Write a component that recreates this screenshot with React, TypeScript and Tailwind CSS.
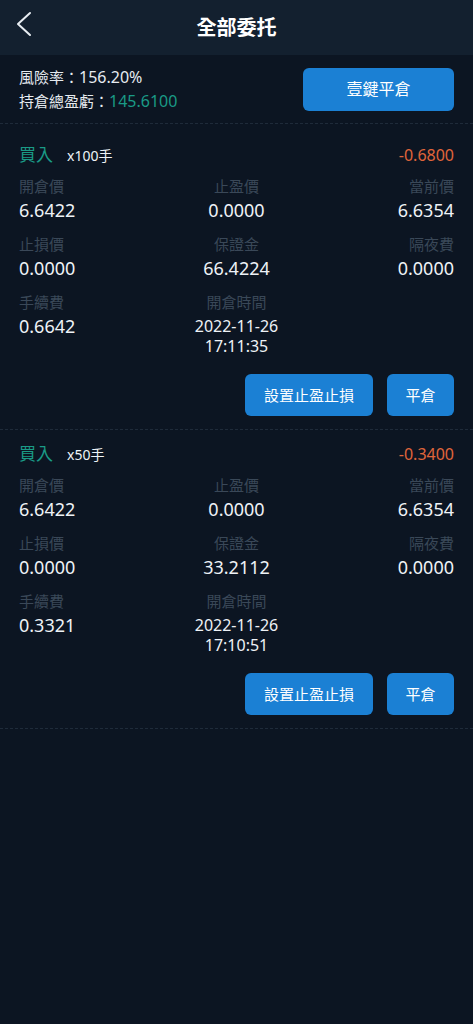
import React from "react";

interface Order {
  lots: number;
  pnl: string;
  openPrice: string;
  takeProfit: string;
  current: string;
  stopLoss: string;
  margin: string;
  overnight: string;
  fee: string;
  date: string;
  time: string;
}

const orders: Order[] = [
  {
    lots: 100,
    pnl: "-0.6800",
    openPrice: "6.6422",
    takeProfit: "0.0000",
    current: "6.6354",
    stopLoss: "0.0000",
    margin: "66.4224",
    overnight: "0.0000",
    fee: "0.6642",
    date: "2022-11-26",
    time: "17:11:35",
  },
  {
    lots: 50,
    pnl: "-0.3400",
    openPrice: "6.6422",
    takeProfit: "0.0000",
    current: "6.6354",
    stopLoss: "0.0000",
    margin: "33.2112",
    overnight: "0.0000",
    fee: "0.3321",
    date: "2022-11-26",
    time: "17:10:51",
  },
];

const Cell = ({ label, value, align }: { label: string; value: string; align: string }) => (
  <div className={`flex flex-col ${align}`}>
    <span className="text-[15px] leading-[22px] text-[#3a4858]">{label}</span>
    <span className="text-[18px] leading-[26px] text-[#eef2f6]">{value}</span>
  </div>
);

const OrderCard = ({ order, first }: { order: Order; first: boolean }) => {
  return (
    <div className={`px-[19px] pb-[13px] border-b border-dashed border-[#1f2b3a] ${first ? "pt-[19px]" : "pt-[12px]"}`}>
      <div className="flex items-center justify-between h-[24px]">
        <div className="flex items-center">
          <span className="text-[17px] text-[#1a9a86]">買入</span>
          <span className="ml-[14px] text-[14px] text-[#eef2f6]">x{order.lots}手</span>
        </div>
        <span className="text-[16px] text-[#e0653b]">{order.pnl}</span>
      </div>

      <div className="mt-[8px] grid grid-cols-3 gap-y-[10px]">
        <Cell label="開倉價" value={order.openPrice} align="items-start" />
        <Cell label="止盈價" value={order.takeProfit} align="items-center" />
        <Cell label="當前價" value={order.current} align="items-end" />
        <Cell label="止損價" value={order.stopLoss} align="items-start" />
        <Cell label="保證金" value={order.margin} align="items-center" />
        <Cell label="隔夜費" value={order.overnight} align="items-end" />
        <Cell label="手續費" value={order.fee} align="items-start" />
        <div className="flex flex-col items-center">
          <span className="text-[15px] leading-[22px] text-[#3a4858]">開倉時間</span>
          <div className="pt-[3px] flex flex-col items-center text-[16px] leading-[20px] text-[#eef2f6]">
            <span>{order.date}</span>
            <span>{order.time}</span>
          </div>
        </div>
        <div />
      </div>

      <div className="mt-[18px] flex justify-end gap-[14px]">
        <button className="h-[42px] w-[128px] rounded-[6px] bg-[#1b80d4] text-[15px] text-white">
          設置止盈止損
        </button>
        <button className="h-[42px] w-[67px] rounded-[6px] bg-[#1b80d4] text-[15px] text-white">
          平倉
        </button>
      </div>
    </div>
  );
};

export default function App() {
  return (
    <div
      className="min-h-[1024px] w-full bg-[#0c1522]"
      style={{ fontFamily: '"Noto Sans", "Noto Sans CJK TC", sans-serif' }}
    >
      {/* header */}
      <div className="relative h-[55px] bg-[#13202f] flex items-center justify-center">
        <button className="absolute left-[14px] top-[10px] p-0">
          <svg width="20" height="28" viewBox="0 0 20 28" fill="none">
            <path d="M16 3 L4 14 L16 25" stroke="#e8edf2" strokeWidth="2" strokeLinecap="round" strokeLinejoin="round" />
          </svg>
        </button>
        <span className="text-[20px] font-bold text-white">全部委托</span>
      </div>

      {/* summary */}
      <div className="flex items-center justify-between px-[19px] pt-[10px] pb-[10px] border-b border-dashed border-[#1f2b3a]">
        <div className="flex flex-col text-[15px] leading-[24px] text-[#e6ebf0]">
          <span>
            風險率：<span className="text-[16px]">156.20%</span>
          </span>
          <span>
            持倉總盈虧：<span className="text-[16px] text-[#1a9a86]">145.6100</span>
          </span>
        </div>
        <button className="h-[43px] w-[151px] rounded-[6px] bg-[#1b80d4] text-[16px] text-white">
          壹鍵平倉
        </button>
      </div>

      {orders.map((o, i) => (
        <OrderCard key={i} order={o} first={i === 0} />
      ))}
    </div>
  );
}
